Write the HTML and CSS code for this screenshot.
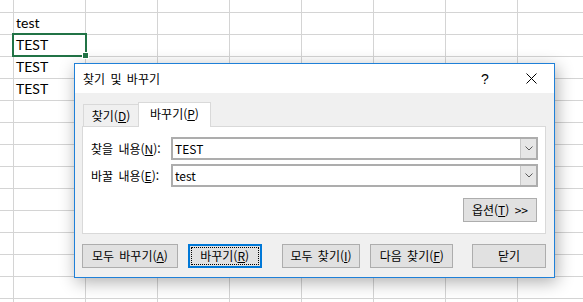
FILE: index.html
```html
<!DOCTYPE html>
<html lang="ko">
  <head>
    <meta charset="UTF-8" />
    <meta name="viewport" content="width=device-width, initial-scale=1.0" />
    <title>찾기 및 바꾸기</title>
    <link rel="stylesheet" href="styles.css">
  </head>
  <body>
    <main class="sheet">
      <div class="cell"></div>
      <div class="cell">test</div>
      <div class="cell selected">TEST</div>
      <div class="cell">TEST</div>
      <div class="cell">TEST</div>
    </main>

    <section class="dialog">
      <header class="titlebar">
        <span class="title">찾기 및 바꾸기</span>
        <span class="caption-btn help">?</span>
        <span class="caption-btn close">
          <svg width="11" height="11" viewBox="0 0 11 11">
            <path d="M0.5 0.5 L10.5 10.5 M10.5 0.5 L0.5 10.5" stroke="#000" stroke-width="1" fill="none" />
          </svg>
        </span>
      </header>

      <div class="dialog-body">
        <div class="tabs">
          <div class="tab">찾기(<u>D</u>)</div>
          <div class="tab active">바꾸기(<u>P</u>)</div>
        </div>

        <div class="panel">
          <div class="field">
            <label class="field-label">찾을 내용(<u>N</u>):</label>
            <div class="combo">
              <span class="combo-value">TEST</span>
              <span class="combo-arrow">
                <svg width="8" height="5" viewBox="0 0 8 5">
                  <path d="M0.5 0.5 L4 4 L7.5 0.5" stroke="#5a5a5a" stroke-width="1" fill="none" />
                </svg>
              </span>
            </div>
          </div>
          <div class="field">
            <label class="field-label">바꿀 내용(<u>E</u>):</label>
            <div class="combo">
              <span class="combo-value">test</span>
              <span class="combo-arrow">
                <svg width="8" height="5" viewBox="0 0 8 5">
                  <path d="M0.5 0.5 L4 4 L7.5 0.5" stroke="#5a5a5a" stroke-width="1" fill="none" />
                </svg>
              </span>
            </div>
          </div>
          <div class="panel-actions">
            <button class="btn btn-options">옵션(<u>T</u>) &gt;&gt;</button>
          </div>
        </div>

        <div class="actions">
          <button class="btn btn-replace-all">모두 바꾸기(<u>A</u>)</button>
          <button class="btn btn-replace default">바꾸기(<u>R</u>)</button>
          <button class="btn btn-find-all">모두 찾기(<u>I</u>)</button>
          <button class="btn btn-find-next">다음 찾기(<u>F</u>)</button>
          <button class="btn btn-close">닫기</button>
        </div>
      </div>
    </section>
  </body>
</html>
```

FILE: styles.css
```css
body {
  margin: 0;
  overflow: hidden;
  background: #fff;
}

/* spreadsheet */
.sheet {
  display: grid;
  grid-template-columns: 13px repeat(8, 72px);
  grid-template-rows: 12px repeat(13, 22px);
  height: 302px;
  background-image: linear-gradient(to right, #d4d4d4 1px, transparent 1px),
    linear-gradient(to bottom, #d4d4d4 1px, transparent 1px);
  background-size: 72px 22px;
  background-position: 13px 12px;
  font-family: Lato, "Liberation Sans", sans-serif;
  font-size: 14px;
  color: #000;
}
.cell {
  grid-column: 2;
  display: flex;
  align-items: flex-end;
  padding: 0 3px 4px;
  line-height: 14px;
}
.cell.selected {
  position: relative;
}
.cell.selected::after {
  content: "";
  position: absolute;
  left: -1px;
  top: -1px;
  right: -2px;
  bottom: -1px;
  border: 2px solid #217346;
}
.cell.selected::before {
  content: "";
  position: absolute;
  right: -3px;
  bottom: -2px;
  width: 5px;
  height: 5px;
  background: #217346;
  box-shadow: 0 0 0 1px #fff;
  z-index: 1;
}

/* dialog */
.dialog {
  position: absolute;
  left: 74px;
  top: 63px;
  width: 479px;
  border: 1px solid #1f80d8;
  background: #f0f0f0;
  box-shadow: 2px 4px 16px rgba(0, 0, 0, 0.32);
  font-family: "Noto Sans CJK KR", sans-serif;
  font-size: 12px;
  color: #000;
}
.titlebar {
  display: flex;
  align-items: center;
  height: 29px;
  background: #fff;
}
.title {
  flex: 1;
  padding-left: 8px;
  word-spacing: 2px;
}
.caption-btn {
  display: flex;
  align-items: center;
  justify-content: center;
  width: 46px;
  height: 29px;
}
.help {
  font-family: "Liberation Sans", sans-serif;
  font-size: 14px;
}

.dialog-body {
  padding: 9px 8px 9px 7px;
}

.tabs {
  display: flex;
  align-items: flex-end;
  height: 25px;
  padding-left: 1px;
  margin-bottom: -1px;
  position: relative;
  z-index: 1;
}
.tab {
  display: flex;
  align-items: center;
  justify-content: center;
  box-sizing: border-box;
  width: 55px;
  height: 22px;
  margin-bottom: 1px;
  border: 1px solid #d9d9d9;
  border-right: 0;
  border-bottom: 0;
  line-height: 1;
}
.tab.active {
  width: 73px;
  height: 25px;
  margin-bottom: 0;
  padding-bottom: 2px;
  border-right: 1px solid #d9d9d9;
  background: #fff;
}

.panel {
  display: flex;
  flex-direction: column;
  gap: 4px;
  padding: 10px 7px 11px 8px;
  border: 1px solid #d9d9d9;
  background: #fff;
}
.field {
  display: flex;
  align-items: center;
  height: 23px;
}
.field-label {
  width: 80px;
  word-spacing: 2px;
  line-height: 1;
}
.combo {
  flex: 1;
  display: flex;
  box-sizing: border-box;
  height: 23px;
  border: 2px solid #adadad;
  background: #fff;
}
.combo-value {
  flex: 1;
  padding-left: 2px;
  line-height: 19px;
}
.combo-arrow {
  display: flex;
  align-items: center;
  justify-content: center;
  width: 15px;
  border-left: 1px solid #c8c8c8;
  background: #e6e6e6;
}
.panel-actions {
  display: flex;
  justify-content: flex-end;
  margin-top: 7px;
  padding-right: 1px;
}

.actions {
  display: flex;
  gap: 10px;
  margin-top: 10px;
}

.btn {
  position: relative;
  box-sizing: border-box;
  height: 24px;
  padding: 0;
  border: 1px solid #adadad;
  background: #e1e1e1;
  font: inherit;
  color: #000;
  line-height: 1;
  word-spacing: 2px;
}
.btn-options { width: 74px; }
.btn-replace-all { width: 96px; }
.btn-replace { width: 74px; }
.btn-find-all { width: 79px; margin-left: 10px; }
.btn-find-next { width: 83px; }
.btn-close { width: 74px; margin-left: 9px; }

.btn.default {
  border: 2px solid #0078d7;
}
.btn.default::after {
  content: "";
  position: absolute;
  left: 1px;
  top: 1px;
  right: 1px;
  bottom: 1px;
  border: 1px dotted #000;
}

u {
  text-underline-offset: 1px;
}
```
